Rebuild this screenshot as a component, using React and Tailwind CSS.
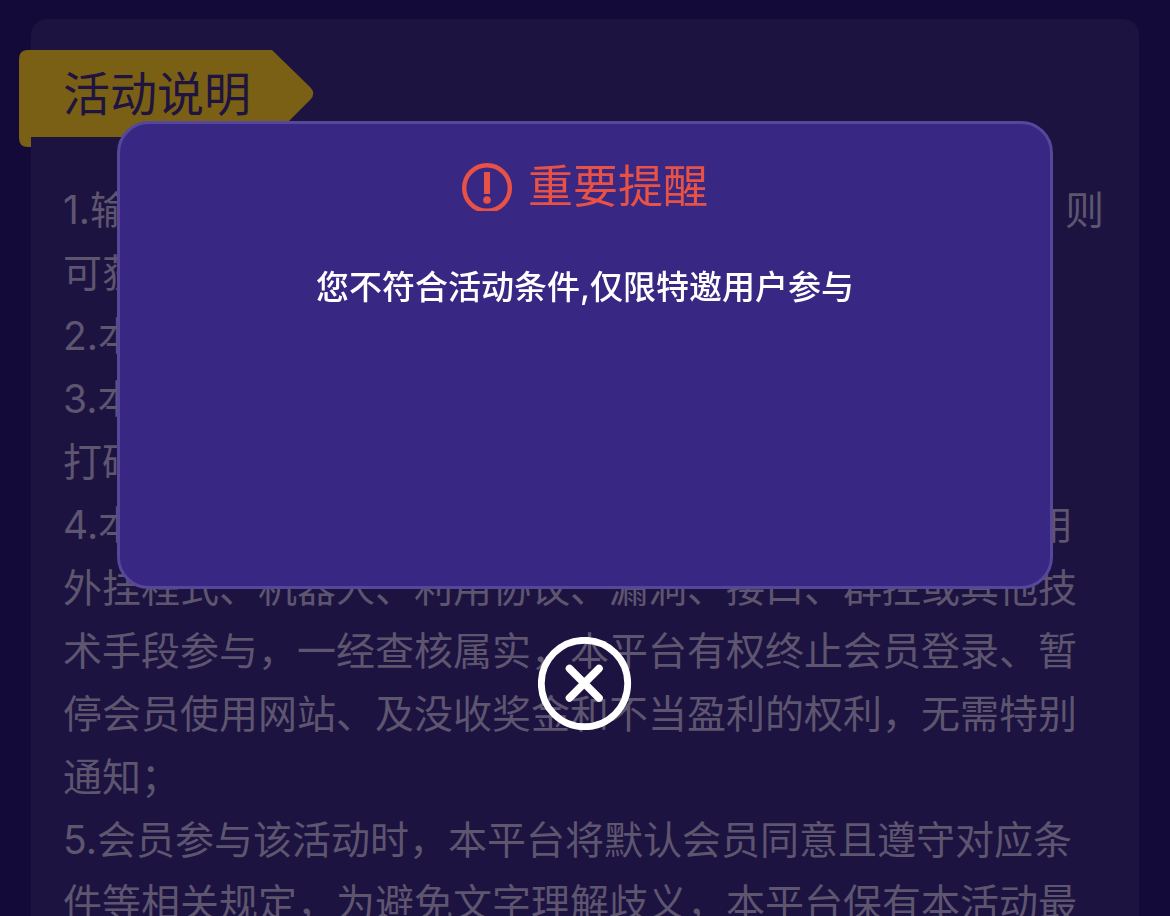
const rules = [
  "1.输赢金额以当日有效注单为准，会员达到对应活动条件，则可获得相应彩金；",
  "2.本活动彩金由系统自动派发到会员账户；",
  "3.本活动所赠送彩金，会员需在领取后完成一倍有效投注，打码完成后即可提款；",
  "4.本活动仅限真实会员参与，如有发现会员以任何方式使用外挂程式、机器人、利用协议、漏洞、接口、群控或其他技术手段参与，一经查核属实，本平台有权终止会员登录、暂停会员使用网站、及没收奖金和不当盈利的权利，无需特别通知；",
  "5.会员参与该活动时，本平台将默认会员同意且遵守对应条件等相关规定，为避免文字理解歧义，本平台保有本活动最终解释权。",
];

function Ribbon({ children }) {
  return (
    <div className="relative -ml-3 w-[295px]">
      <svg
        className="absolute left-0 top-0 h-[98px] w-[295px]"
        viewBox="0 0 295 98"
        fill="#796014"
        aria-hidden="true"
      >
        <path d="M9 0H253L291.500 37.500Q297 43.500 291.500 49.500L254 87H12V97H9Q0 97 0 88V9Q0 0 9 0Z" />
      </svg>
      <h1 className="relative pl-11 text-[47px] leading-[87px] text-[#1f1340]">{children}</h1>
    </div>
  );
}

function AlertIcon() {
  return (
    <svg className="h-12 w-[50px]" viewBox="0 0 50 48" fill="none" aria-hidden="true">
      <circle cx="25" cy="25" r="22.800" stroke="#e85246" strokeWidth="4.400" />
      <path d="M22 9H28V31H22Z" fill="#e85246" />
      <circle cx="25" cy="37" r="3.800" fill="#e85246" />
    </svg>
  );
}

function Dialog() {
  return (
    <div className="fixed inset-0 flex flex-col items-center pt-[121px]">
      <section
        role="alertdialog"
        aria-labelledby="notice-title"
        aria-describedby="notice-text"
        className="flex h-[468px] w-4/5 flex-col items-center rounded-[32px] border-3 border-[#57479a] bg-[#382783] pt-[31px]"
      >
        <h2
          id="notice-title"
          className="flex items-center gap-4 text-[45px] leading-[64px] text-[#e85246]"
        >
          <AlertIcon />
          重要提醒
        </h2>
        <p id="notice-text" className="mt-9 text-[33px] leading-[64px] font-medium text-white">
          您不符合活动条件,仅限特邀用户参与
        </p>
      </section>
      <button type="button" aria-label="关闭" className="mt-12">
        <svg className="size-[94px]" viewBox="0 0 94 94" fill="none" stroke="#fff" aria-hidden="true">
          <circle cx="46.500" cy="46.500" r="43.200" strokeWidth="6.800" />
          <path d="M31.500 31.500L61 61M61 31.500L31.500 61" strokeWidth="7.600" strokeLinecap="round" />
        </svg>
      </button>
    </div>
  );
}

export default function App() {
  return (
    <div
      lang="zh-CN"
      className="h-screen overflow-hidden bg-[#130a39] px-[31px] pt-[19px] font-['Inter','Noto_Sans_CJK_SC',sans-serif]"
    >
      <main className="rounded-2xl bg-[#1c1341] pt-[31px] pb-8">
        <Ribbon>活动说明</Ribbon>
        <div className="mt-[41px] px-8 text-[39px] leading-[63px] text-[#5e556f]">
          {rules.map((rule) => (
            <p key={rule}>{rule}</p>
          ))}
        </div>
      </main>
      <Dialog />
    </div>
  );
}
